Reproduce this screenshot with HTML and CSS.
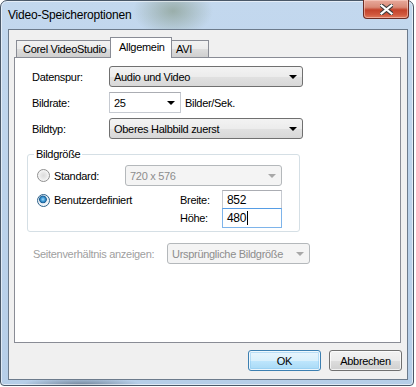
FILE: index.html
```html
<!DOCTYPE html>
<html lang="de">
<head>
    <meta charset="UTF-8">
    <title>Video-Speicheroptionen</title>
    <link rel="stylesheet" href="styles.css">
</head>
<body>
    <div class="window">
        <div class="titlebar">
            <span class="title">Video-Speicheroptionen</span>
            <span class="close-btn">
                <svg width="13" height="11" viewBox="0 0 13 11">
                    <path d="M1.5 1.5 L11.5 9.5 M11.5 1.5 L1.5 9.5" stroke="#3b3b3b" stroke-width="4.2" stroke-linecap="square"/>
                    <path d="M1.5 1.5 L11.5 9.5 M11.5 1.5 L1.5 9.5" stroke="#fff" stroke-width="2.2" stroke-linecap="square"/>
                </svg>
            </span>
        </div>

        <div class="client">
            <div class="tabs">
                <div class="tab first">Corel VideoStudio</div>
                <div class="tab active">Allgemein</div>
                <div class="tab">AVI</div>
            </div>

            <div class="panel">
                <div class="row">
                    <span class="lbl">Datenspur:</span>
                    <div class="select wide"><span>Audio und Video</span><i class="arrow"></i></div>
                </div>
                <div class="row">
                    <span class="lbl">Bildrate:</span>
                    <div class="combo"><span>25</span><i class="arrow"></i></div>
                    <span class="unit">Bilder/Sek.</span>
                </div>
                <div class="row">
                    <span class="lbl">Bildtyp:</span>
                    <div class="select wide"><span>Oberes Halbbild zuerst</span><i class="arrow"></i></div>
                </div>

                <fieldset class="group">
                    <legend>Bildgröße</legend>
                    <div class="group-grid">
                        <div class="opt r1"><span class="radio"></span>Standard:</div>
                        <div class="select disabled size"><span>720 x 576</span><i class="arrow"></i></div>

                        <div class="opt r2"><span class="radio checked"></span>Benutzerdefiniert</div>
                        <span class="field-lbl r2">Breite:</span>
                        <div class="textbox r2">852</div>

                        <span class="field-lbl r3">Höhe:</span>
                        <div class="textbox focus r3">480<i class="caret"></i></div>
                    </div>
                </fieldset>

                <div class="row aspect">
                    <span class="lbl dim">Seitenverhältnis anzeigen:</span>
                    <div class="select disabled ratio"><span>Ursprüngliche Bildgröße</span><i class="arrow"></i></div>
                </div>
            </div>

            <div class="buttons">
                <button class="btn default">OK</button>
                <button class="btn">Abbrechen</button>
            </div>
        </div>
    </div>
</body>
</html>
```

FILE: styles.css
```css
body {
    margin: 0;
    background-color: #fff;
    font-family: "Liberation Sans", Arial, sans-serif;
    font-size: 11px;
    letter-spacing: -0.3px;
    color: #000;
}

.window {
    box-sizing: border-box;
    width: 414px;
    height: 386px;
    border: 1px solid #4a5868;
    border-radius: 7px 7px 4px 4px;
    box-shadow: inset 0 0 0 1px rgba(255, 255, 255, 0.55);
    background:
        radial-gradient(ellipse 40px 26px at 172px 10px, rgba(120, 140, 115, 0.55), transparent),
        radial-gradient(ellipse 60px 8px at 80px 384px, rgba(60, 72, 90, 0.55), transparent),
        linear-gradient(180deg, #c3d8ee 0%, #bcd3eb 50%, #b6cee8 100%);
}

.titlebar {
    height: 28px;
    display: flex;
    justify-content: space-between;
    align-items: flex-start;
}

.title {
    font-size: 12px;
    letter-spacing: -0.2px;
    margin-left: 7px;
    margin-top: 7px;
}

.close-btn {
    width: 46px;
    height: 19px;
    margin-top: -1px;
    margin-right: 4px;
    box-sizing: border-box;
    border: 1px solid #6b2c24;
    border-top: none;
    border-radius: 0 0 4px 4px;
    background: linear-gradient(180deg, #e8aa9c 0%, #d98a77 40%, #c4432b 55%, #d0573d 80%, #e07a5c 100%);
    box-shadow: inset 0 0 0 1px rgba(255, 220, 210, 0.5);
    display: flex;
    justify-content: center;
    align-items: center;
}

.client {
    box-sizing: border-box;
    width: 400px;
    height: 351px;
    margin-left: 7px;
    border: 1px solid #6c7b8c;
    background-color: #f0f0f0;
    padding: 7px 7px 0 5px;
}

/* tabs */
.tabs {
    height: 20px;
    display: flex;
    align-items: flex-end;
    padding-left: 2px;
    position: relative;
    z-index: 1;
}

.tab {
    box-sizing: border-box;
    height: 17px;
    padding: 2px 6px 0;
    border: 1px solid #898c95;
    border-bottom: none;
    background: linear-gradient(180deg, #f2f2f2 0%, #ebebeb 50%, #dddddd 51%, #cfcfcf 100%);
    white-space: nowrap;
}

.tab.first {
    width: 95px;
}

.tab.active {
    width: 62px;
    height: 21px;
    margin: 0 -1px -1px -1px;
    padding: 3px 0 0 8px;
    background: #fff;
    position: relative;
    z-index: 2;
}

.tab:last-child {
    width: 38px;
    padding-left: 4px;
}

.panel {
    box-sizing: border-box;
    width: 387px;
    height: 286px;
    border: 1px solid #898c95;
    background-color: #fff;
    padding: 8px 0 0 17px;
}

.row {
    display: flex;
    align-items: center;
    height: 21px;
    margin-bottom: 5px;
}

.lbl {
    width: 77px;
    flex-shrink: 0;
}

.lbl.dim {
    width: 135px;
    margin-left: 1px;
    margin-right: -1px;
    color: #a0a0a0;
}

.unit {
    margin-left: 4px;
}

/* drop-down lists */
.select, .combo {
    box-sizing: border-box;
    height: 21px;
    display: flex;
    align-items: center;
    justify-content: space-between;
    padding: 0 5px 0 4px;
}

.select {
    border: 1px solid #707070;
    border-radius: 3px;
    background: linear-gradient(180deg, #f3f3f3 0%, #ececec 50%, #e1e1e1 51%, #d8d8d8 100%);
}

.select.wide {
    width: 194px;
}

.combo {
    width: 72px;
    border: 1px solid #c6cad1;
    border-top-color: #abadb3;
    background-color: #fff;
}

.arrow {
    width: 0;
    height: 0;
    border-left: 4px solid transparent;
    border-right: 4px solid transparent;
    border-top: 4px solid #000;
    margin-top: 1px;
}

.select.disabled {
    border-color: #b4b8bb;
    background: #f4f4f4;
    color: #8d8d8d;
}

.select.disabled .arrow {
    border-top-color: #a8a8a8;
}

.row.aspect {
    margin-top: 11px;
}

.select.ratio {
    width: 143px;
}

/* group box */
.group {
    box-sizing: border-box;
    width: 273px;
    margin: 9px 0 0 -5px;
    padding: 4px 0 5px 9px;
    border: 1px solid #d5dfe5;
    border-radius: 3px;
}

.group legend {
    padding: 0 2px;
    margin-left: -3px;
    line-height: 13px;
}

.group-grid {
    display: grid;
    grid-template-columns: 88px 55px 42px 60px;
    grid-template-rows: 21px 20px 20px;
    row-gap: 0;
    align-items: center;
}

.opt {
    grid-column: 1 / 3;
    display: flex;
    align-items: center;
    height: 100%;
}

.opt.r1 {
    grid-column: 1;
    grid-row: 1;
}

.r2 {
    grid-row: 2;
    margin-top: 8px;
}

.r3 {
    grid-row: 3;
    margin-top: 4px;
}

.opt.r2 {
    grid-column: 1 / 3;
}

.select.size {
    grid-column: 2 / 5;
    grid-row: 1;
    height: 21px;
}

.field-lbl {
    grid-column: 3;
}

.textbox {
    grid-column: 4;
    box-sizing: border-box;
    height: 20px;
    border: 1px solid #c6cad1;
    border-top-color: #abadb3;
    background-color: #fff;
    padding: 0 4px;
    display: flex;
    align-items: center;
    font-size: 12px;
}

.textbox.focus {
    border-color: #7eb4ea;
    border-top-color: #569de5;
}

.caret {
    width: 1px;
    height: 14px;
    background-color: #000;
    margin-left: 1px;
}

.radio {
    box-sizing: border-box;
    width: 13px;
    height: 13px;
    border-radius: 50%;
    border: 1px solid #8f8f8f;
    background: radial-gradient(circle at 50% 50%, #dcdcdc 0, #e8e8e8 3px, #f4f4f4 5px, #fbfbfb 6px);
    margin-right: 4px;
    flex-shrink: 0;
}

.radio.checked {
    border-color: #2c628b;
    background: radial-gradient(circle at 45% 40%, #a5d8f7 0, #3e9ad6 2px, #1b5e94 3.5px, #e6eef5 4.2px, #f4f6f8 6px);
}

/* dialog buttons */
.buttons {
    display: flex;
    justify-content: flex-end;
    gap: 8px;
    margin-top: 7px;
    padding-right: 0;
    width: 388px;
}

.btn {
    box-sizing: border-box;
    width: 73px;
    height: 21px;
    font-family: "Liberation Sans", Arial, sans-serif;
    font-size: 11px;
    letter-spacing: -0.3px;
    color: #000;
    border: 1px solid #707070;
    border-radius: 3px;
    background: linear-gradient(180deg, #f2f2f2 0%, #ebebeb 50%, #dddddd 51%, #cfcfcf 100%);
    box-shadow: inset 0 0 0 1px rgba(255, 255, 255, 0.7);
    padding: 0;
}

.btn.default {
    border-color: #3c7fb1;
    background: linear-gradient(180deg, #eaf6fd 0%, #d9f0fc 50%, #bee6fd 51%, #a7d9f5 100%);
    box-shadow: inset 0 0 0 1px rgba(255, 255, 255, 0.8), inset 0 0 0 2px rgba(140, 200, 240, 0.5);
}
```
